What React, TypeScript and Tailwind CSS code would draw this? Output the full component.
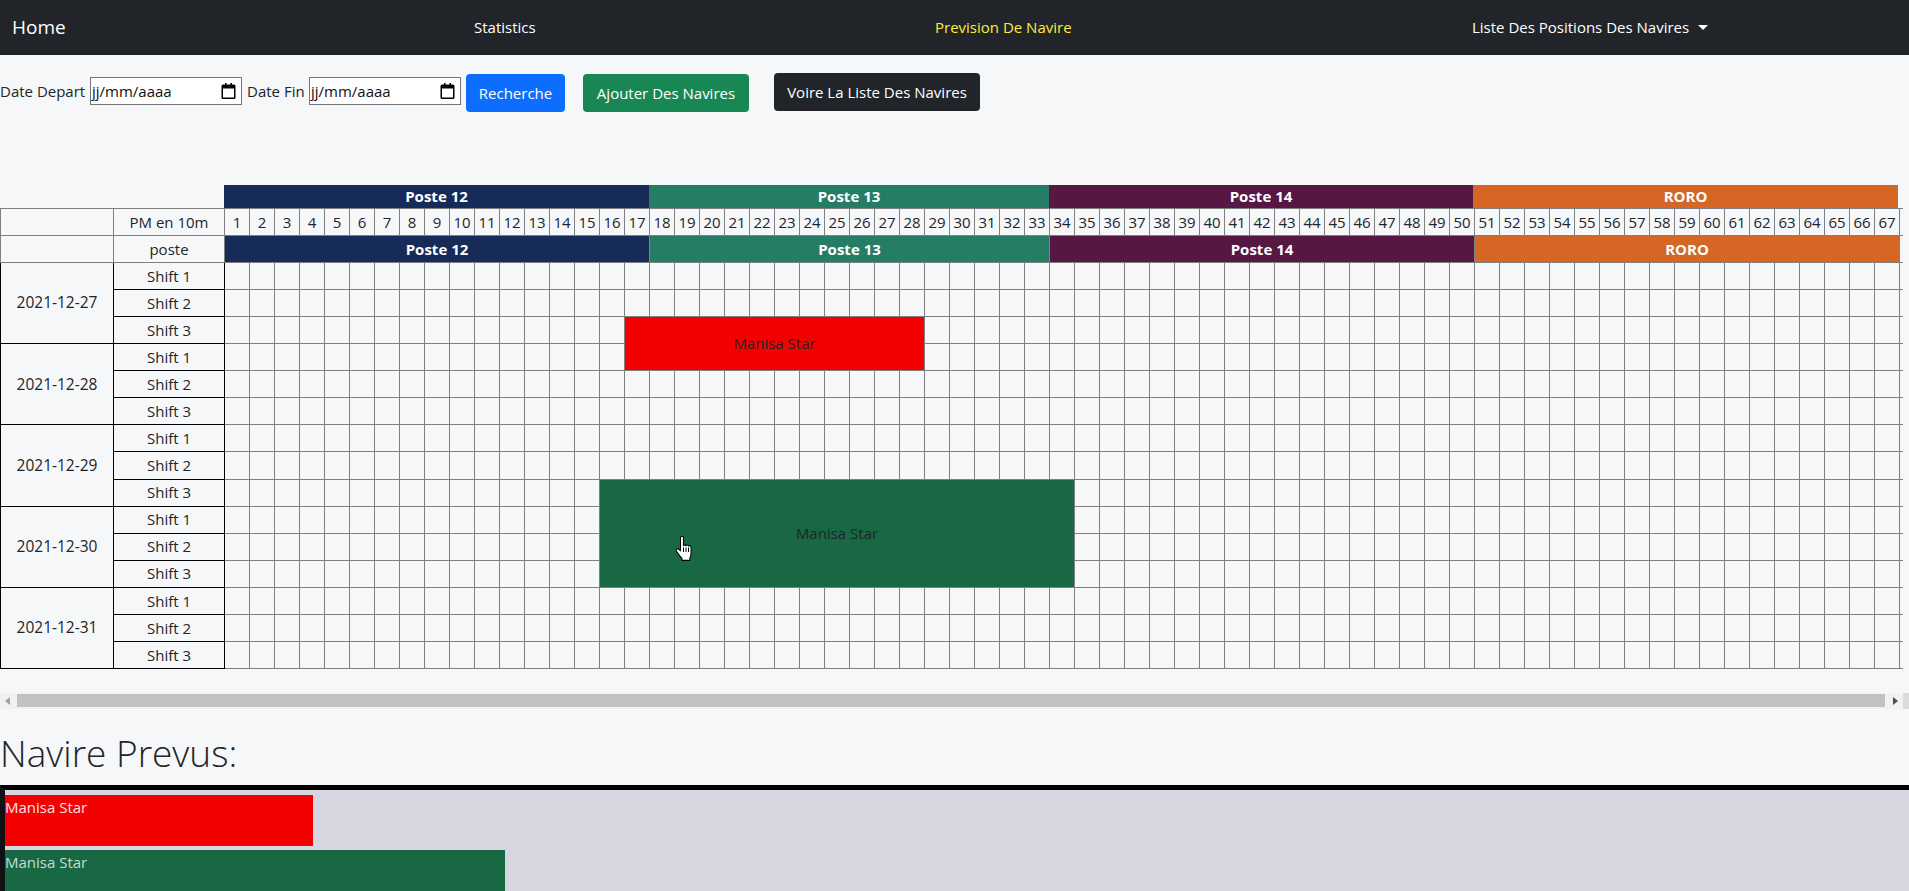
const FONT = "font-['Open_Sans','Noto_Sans',sans-serif]";

const columns = Array.from({ length: 67 }, (_, i) => i + 1);
const days = ["2021-12-27", "2021-12-28", "2021-12-29", "2021-12-30", "2021-12-31"];

const postes = [
  { name: "Poste 12", span: 17, color: "bg-[#172b59]" },
  { name: "Poste 13", span: 16, color: "bg-[#267d66]" },
  { name: "Poste 14", span: 17, color: "bg-[#561742]" },
  { name: "RORO", span: 17, color: "bg-[#d56624]" },
];

const cell = "border border-[#808080] p-0";
const blackCell = "border border-black p-0 text-center";

// rows of the grid; day/shift index => which ship cell starts or covers the columns
const Row = ({ day, shift }: { day: number; shift: number }) => {
  const row = day * 3 + shift;
  return (
    <tr className="h-[27.07px]">
      {shift === 0 && (
        <td rowSpan={3} className={`${blackCell} text-[15.5px]`}>
          {days[day]}
        </td>
      )}
      <td className={blackCell}>Shift {shift + 1}</td>
      {columns.map((c) => {
        // red ship: rows 2-3, columns 17-28
        if (row >= 2 && row <= 3 && c >= 17 && c <= 28) {
          if (row === 2 && c === 17) {
            return (
              <td key={c} rowSpan={2} colSpan={12} className={`${cell} bg-[#f30000] text-center text-[#212529]`}>
                Manisa Star
              </td>
            );
          }
          return null;
        }
        // green ship: rows 8-11, columns 16-34
        if (row >= 8 && row <= 11 && c >= 16 && c <= 34) {
          if (row === 8 && c === 16) {
            return (
              <td key={c} rowSpan={4} colSpan={19} className={`${cell} bg-[#196844] text-center text-[#212529]`}>
                Manisa Star
              </td>
            );
          }
          return null;
        }
        return <td key={c} className={cell} />;
      })}
      <td className={cell} />
    </tr>
  );
};

export default function App() {
  return (
    <div className={`relative h-[891px] overflow-hidden bg-[#f6f7f9] text-[15px] text-[#212529] ${FONT}`}>
      <nav className="flex h-[55px] items-center bg-[#212529] text-[15px] text-white">
        <a className="ml-3 w-[462px] text-[19px]">Home</a>
        <a className="w-[461px]">Statistics</a>
        <a className="w-[537px] text-[#ffeb3b]">Prevision De Navire</a>
        <a className="flex items-center">
          Liste Des Positions Des Navires
          <span className="ml-[9px] border-x-[5px] border-t-[5px] border-x-transparent border-t-white" />
        </a>
      </nav>

      <div className="flex h-[130px] items-start pt-[19px]">
        <div className="mt-[3px] flex items-center">
          <label className="w-[87px]">Date Depart</label>
          <div className="ml-[3px] flex h-[28px] w-[152px] items-center justify-between border border-[#767676] bg-white pl-[1px] pr-[5px] text-[#111]">
            jj/mm/aaaa
            <CalendarIcon />
          </div>
          <label className="ml-[5px] w-[59px]">Date Fin</label>
          <div className="ml-[3px] flex h-[28px] w-[152px] items-center justify-between border border-[#767676] bg-white pl-[1px] pr-[5px] text-[#111]">
            jj/mm/aaaa
            <CalendarIcon />
          </div>
        </div>
        <button className="ml-[5px] h-[38px] w-[99px] rounded bg-[#0d6efd] text-white">Recherche</button>
        <button className="ml-[18px] h-[38px] w-[166px] rounded bg-[#198754] text-white">Ajouter Des Navires</button>
        <button className="ml-[25px] -mt-[1px] h-[38px] w-[206px] rounded bg-[#212529] text-white">
          Voire La Liste Des Navires
        </button>
      </div>

      <div className="flex h-[23px] pl-[224px] text-center font-bold text-white">
        <div className="flex w-[425px] items-center justify-center bg-[#172b59]">Poste 12</div>
        <div className="flex w-[400px] items-center justify-center bg-[#267d66]">Poste 13</div>
        <div className="flex w-[424px] items-center justify-center bg-[#561742]">Poste 14</div>
        <div className="flex w-[425px] items-center justify-center bg-[#d56624]">RORO</div>
      </div>

      <div className="w-[1903px] overflow-hidden">
        <table className="w-[1924px] table-fixed border-collapse">
          <colgroup>
            <col className="w-[113px]" />
            <col className="w-[111px]" />
            {columns.map((c) => (
              <col key={c} className="w-[25px]" />
            ))}
            <col className="w-[25px]" />
          </colgroup>
          <tbody>
            <tr className="h-[27px]">
              <td className={cell} />
              <td className={`${cell} text-center`}>PM en 10m</td>
              {columns.map((c) => (
                <td key={c} className={`${cell} text-center`}>
                  {c}
                </td>
              ))}
              <td className={cell} />
            </tr>
            <tr className="h-[27px]">
              <td className={cell} />
              <td className={`${cell} text-center`}>poste</td>
              {postes.map((p) => (
                <td key={p.name} colSpan={p.span} className={`${cell} ${p.color} text-center font-bold text-white`}>
                  {p.name}
                </td>
              ))}
              <td className={cell} />
            </tr>
            {days.map((_, day) => [0, 1, 2].map((shift) => <Row key={`${day}-${shift}`} day={day} shift={shift} />))}
          </tbody>
        </table>
      </div>

      <div className="mt-[24px] flex h-[16px] items-center bg-[#f1f1f1]">
        <span className="ml-[5px] border-y-[4px] border-r-[5px] border-y-transparent border-r-[#a3a3a3]" />
        <div className="ml-[7px] h-[13px] w-[1868px] bg-[#c1c1c1]" />
        <span className="ml-[8px] border-y-[4px] border-l-[5px] border-y-transparent border-l-[#505050]" />
        <div className="ml-auto h-full w-[6px] bg-[#dcdcdc]" />
      </div>

      <h2 className="mt-[20px] h-[47px] text-[37px] font-light leading-[47px]">Navire Prevus:</h2>

      <div className="mt-[9px] h-[300px] border-l-[5px] border-t-[5px] border-l-[#111] border-t-black bg-[#d7d7e1]">
        <div className="pt-[5px] leading-[24px]">
          <div className="h-[51px] w-[308px] bg-[#f30000] text-[#ffe3e3]">Manisa Star</div>
          <div className="mt-[4px] h-[50px] w-[500px] bg-[#196844] text-[#c5dcd1]">Manisa Star</div>
        </div>
      </div>

      <HandCursor />
    </div>
  );
}

function CalendarIcon() {
  return (
    <svg width="15" height="16" viewBox="0 0 15 16" className="text-black">
      <path
        fill="currentColor"
        d="M2 1.5h2V0h1.5v1.5h4V0H11v1.5h2A1.5 1.5 0 0 1 14.5 3v11.5A1.5 1.5 0 0 1 13 16H2a1.5 1.5 0 0 1-1.5-1.5V3A1.5 1.5 0 0 1 2 1.5zM2 5.5v9h11v-9H2z"
      />
    </svg>
  );
}

// mouse pointer caught in the screenshot, over the green ship
function HandCursor() {
  return (
    <svg width="18" height="27" viewBox="0 0 18 24" preserveAspectRatio="none" className="absolute left-[675px] top-[535px]">
      <path
        fill="white"
        stroke="black"
        strokeWidth="1"
        strokeLinejoin="round"
        d="M5.5 2c.6-1.2 2.4-1.2 2.9 0v7.5c.6-1 2.1-1 2.6 0 .6-.9 2.2-.8 2.6.3.7-.6 2.3-.3 2.4 1.1v5.6c0 1.6-.5 2.7-1.1 3.8v2.2H7v-1.6c-1.8-1.6-3.4-4-5.6-6.6-1-1.3.7-2.9 2-1.9l2.1 1.7z"
      />
      <path stroke="black" strokeWidth="1" d="M8.5 11v4M11 11v4M13.5 11v4" />
    </svg>
  );
}
